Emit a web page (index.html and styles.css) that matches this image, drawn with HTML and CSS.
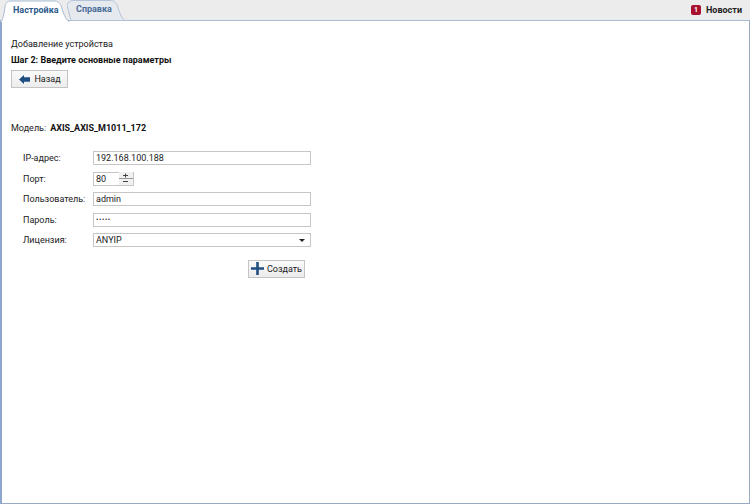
FILE: index.html
```html
<!DOCTYPE html>
<html lang="ru">
<head>
<meta charset="utf-8">
<title>Настройка</title>
<link rel="stylesheet" href="styles.css">
</head>
<body>
<div class="app">
  <header class="topbar">
    <nav class="tabs">
      <div class="tab tab-active">
        <svg class="tab-shape" width="70" height="22" viewBox="0 0 70 22"><path d="M0.5 22 C3 20 4 14 5 7 C5.6 3 7 1 11 1 H54 C58 1 60 3 61.500 7 C63 12 65 19 69.500 22" fill="#fff" stroke="#a9bdd6"/></svg>
        <span class="tab-text">Настройка</span>
      </div>
      <div class="tab tab-idle">
        <svg class="tab-shape" width="60" height="21" viewBox="0 0 60 21"><path d="M0 5 C1 2 3 0.500 7 0.500 H43 C47 0.500 49 2 50.500 6 C52 11 54 18 58 20.500 H4 Z" fill="#e6e9ee" stroke="#b4c4d8"/></svg>
        <span class="tab-text">Справка</span>
      </div>
    </nav>
    <div class="news"><span class="badge">1</span><span class="news-label">Новости</span></div>
  </header>
  <main class="panel">
    <div class="title">Добавление устройства</div>
    <div class="step">Шаг 2: Введите основные параметры</div>
    <button class="btn btn-back" type="button">
      <svg class="ico" width="11" height="9" viewBox="0 0 11 9"><path d="M0 4.500 L5 0 V2.200 H11 V6.800 H5 V9 Z" fill="#1f4f82"/></svg>
      <span>Назад</span>
    </button>
    <div class="model"><span>Модель:</span><b>AXIS_AXIS_M1011_172</b></div>
    <form class="form">
      <div class="row"><span class="lbl">IP-адрес:</span><div class="field">192.168.100.188</div></div>
      <div class="row"><span class="lbl">Порт:</span>
        <div class="field spin"><span>80</span>
          <span class="spin-btns"><svg width="14" height="13" viewBox="0 0 14 13"><path d="M4 3.500h5M6.500 1.500v4" stroke="#444" fill="none"/><path d="M0 6.500h14" stroke="#999" fill="none"/><path d="M4 9.500h5" stroke="#444" fill="none"/></svg></span>
        </div>
      </div>
      <div class="row"><span class="lbl">Пользователь:</span><div class="field">admin</div></div>
      <div class="row"><span class="lbl">Пароль:</span><div class="field pass">•••••</div></div>
      <div class="row"><span class="lbl">Лицензия:</span>
        <div class="field select"><span>ANYIP</span><svg width="6" height="3" viewBox="0 0 6 3"><path d="M0 0h6L3 3z" fill="#222"/></svg></div>
      </div>
      <div class="actions">
        <button class="btn btn-create" type="button">
          <svg class="ico" width="13" height="13" viewBox="0 0 13 13"><path d="M5.200 0h2.600v5.200H13v2.600H7.800V13H5.200V7.800H0V5.200h5.200z" fill="#1f4f82"/></svg>
          <span>Создать</span>
        </button>
      </div>
    </form>
  </main>
</div>
</body>
</html>
```
FILE: styles.css
```css
* { box-sizing: border-box; }
html, body { margin: 0; height: 100%; }
body { font-family: Roboto, "Open Sans", sans-serif; font-size: 9px; color: #222; background: #fff; }
.app { width: 750px; height: 504px; display: flex; flex-direction: column; background: #ececec; }
.topbar { height: 20px; display: flex; justify-content: space-between; align-items: flex-end; }
.tabs { display: flex; align-items: flex-end; height: 20px; position: relative; z-index: 2; }
.tab { font-weight: 700; position: relative; }
.tab-shape { position: absolute; left: 0; top: 0; }
.tab-text { position: relative; }
.tab-active { width: 67px; height: 22px; margin-bottom: -2px; color: #2d5a8c; padding: 5px 0 0 13px; z-index: 2; }
.tab-idle { width: 60px; height: 20px; color: #4a6f99; padding: 4px 0 0 9px; }
.news { display: flex; align-items: center; gap: 5px; padding-right: 8px; height: 20px; font-weight: 700; }
.badge { width: 10px; height: 10px; background: #a8102f; color: #fff; border-radius: 2px; font-size: 7px; line-height: 10px; text-align: center; }
.news-label { color: #222; }
.panel { flex: 1; background: #fff; border: 1px solid #9aa9c4; border-left: 2px solid #8fa6cc; border-top-color: #a9bdd6; padding: 17px 0 0 9px; }
.title { line-height: 12px; height: 12px; }
.step { margin-top: 4px; line-height: 12px; font-weight: 700; color: #111; }
.btn { font: inherit; color: #222; display: flex; align-items: center; justify-content: center; background: linear-gradient(#fafafa, #ececec); border: 1px solid #c4c4c4; padding: 0; }
.btn-back { width: 57px; height: 18px; margin-top: 4px; gap: 4px; padding-left: 1px; }
.model { display: flex; gap: 4px; margin-top: 34px; line-height: 12px; }
.model b { color: #111; }
.form { margin-top: 17px; width: 300px; padding-left: 12px; display: flex; flex-direction: column; gap: 6.500px; }
.row { display: flex; align-items: center; height: 14px; }
.lbl { width: 70px; flex: none; }
.field { width: 218px; height: 14px; border: 1px solid #c6c6c6; background: #fff; padding-left: 2px; line-height: 12px; display: flex; align-items: center; }
.spin { width: 41px; justify-content: space-between; }
.spin-btns { display: flex; background: #f1f1f1; }
.pass { letter-spacing: 0.6px; font-size: 7px; color: #333; }
.select { justify-content: space-between; padding-right: 5px; }
.actions { display: flex; justify-content: flex-end; margin: 6px 6px 0 0; }
.btn-create { width: 57px; height: 18px; gap: 3px; }
```
